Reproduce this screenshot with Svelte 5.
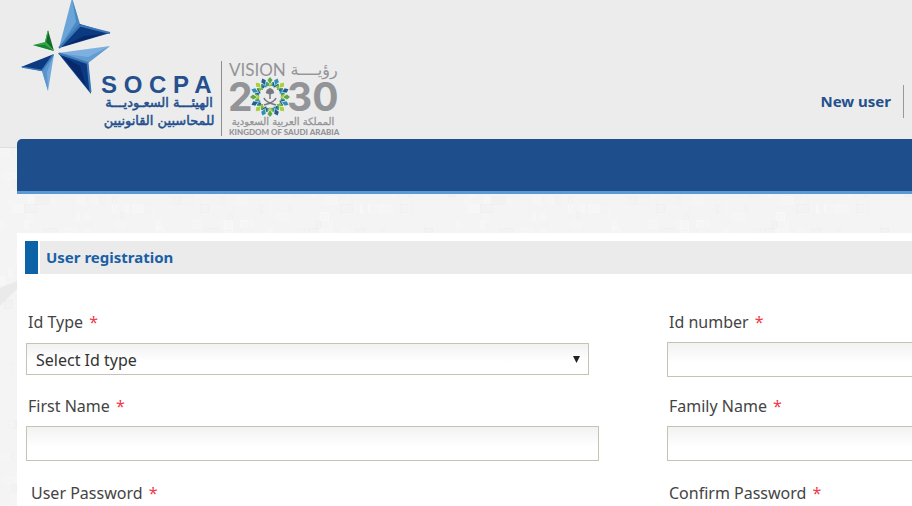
<script>
  let seed = 11;
  function rand() {
    seed = (seed * 16807) % 2147483647;
    return seed / 2147483647;
  }
  const tiles = Array.from({ length: 560 }, () => ({
    x: Math.floor(rand() * 113) * 4,
    y: Math.floor(rand() * 38) * 8,
    w: 4 * (1 + Math.floor(rand() * 3)),
    dark: rand() > 0.5,
    alpha: 0.1 + rand() * 0.6
  }));
  const ring = Array.from({ length: 16 }, (_, i) => i * 22.5);
  const dots = ['#5aa845', '#2c8fb8', '#a8d03c', '#1f5f94'];

  let idType = $state('');
</script>

<div class="page">
  <svg class="texture" aria-hidden="true">
    <defs>
      <pattern id="tiles" width="456" height="304" patternUnits="userSpaceOnUse">
        {#each tiles as t}
          <rect x={t.x + 0.5} y={t.y + 0.5} width={t.w} height="8"
            fill={t.dark ? '#f2f2f2' : '#f7f7f7'} stroke={t.dark ? '#ededed' : '#fafafa'} opacity={t.alpha} />
        {/each}
      </pattern>
    </defs>
    <rect width="100%" height="100%" fill="url(#tiles)" />
    <path d="M0 140 L17 133 V141 L0 158Z" fill="#e6e6e6" opacity=".7" />
  </svg>

  <header>
    <svg class="logo" width="350" height="139" viewBox="0 0 350 139" role="img" aria-label="SOCPA and Vision 2030">
      <g>
        <path d="M72 -2 L80 24 L59 48Z" fill="#6aa4d8" />
        <path d="M72 -2 L76 22 L59 48 L80 25Z" fill="#4b88c4" />
        <path d="M80 24 L110 33 L59 48Z" fill="#0c3a80" />
        <path d="M59 48 L80 25.500 L110 33" fill="none" stroke="#3c78b8" stroke-width="2" stroke-linejoin="round" />
        <path d="M84 36 L104 34 L64 46Z" fill="#07296b" />
        <path d="M58 53 L110 46 L88 63Z" fill="#7db0de" />
        <path d="M58 53 L88 57 L110 46 L88 63Z" fill="#639cd2" />
        <path d="M58 53 L88 63 L91 94Z" fill="#0c3a80" />
        <path d="M62 56 L80 66 L86 86Z" fill="#07296b" />
        <path d="M59 53.500 L87.500 63 L90.500 92" fill="none" stroke="#3c78b8" stroke-width="2" stroke-linejoin="round" />
        <path d="M54 54 L21 67 L42 71Z" fill="#0c3a80" />
        <path d="M54 54 L42 71 L48 91Z" fill="#74aadb" />
        <path d="M54 54 L47 72 L48 91 L42 71Z" fill="#5a94cc" />
        <path d="M22 67 L42 70.500 L53 55" fill="none" stroke="#3c78b8" stroke-width="1.500" />
        <path d="M48 30 L54 51 L45 42Z" fill="#126c29" />
        <path d="M54 51 L33 45 L45 42Z" fill="#2fa33f" />
        <path d="M33 45 L45 45 L54 51Z" fill="#168436" />
        <path d="M48 31 L45.500 42 L53 50" fill="none" stroke="#3fae4c" />
      </g>
      <g fill="#24508e">
        <text x="101" y="93" font-family="'Liberation Sans', sans-serif" font-size="24" font-weight="700">S O C P A</text>
        <g font-family="'DejaVu Sans', sans-serif" font-size="13" text-anchor="middle" stroke="#24508e" stroke-width=".5">
          <text x="159" y="107">الهيئـــة السعـوديـــة</text>
          <text x="159" y="125">للمحاسبين القانونيين</text>
        </g>
      </g>
      <path d="M221.5 61 V136" stroke="#8e8e8e" />
      <g fill="#939498">
        <text x="229" y="76" font-family="Lato, sans-serif" font-size="17">VISION</text>
        <text x="314" y="75" font-family="'DejaVu Sans', sans-serif" font-size="16" text-anchor="middle">رؤيــــة</text>
        <g font-family="Inter, sans-serif" font-size="39" font-weight="700">
          <text x="228" y="111">2</text>
          <text x="287" y="111">30</text>
        </g>
        <text x="283" y="125" font-family="'DejaVu Sans', sans-serif" font-size="10" text-anchor="middle" stroke="#939498" stroke-width=".3">المملكة العربية السعودية</text>
        <text x="229" y="135" font-family="Lato, sans-serif" font-size="8" font-weight="900">KINGDOM OF SAUDI ARABIA</text>
      </g>
      <g transform="translate(270 97)">
        {#each ring as a, i}
          <g transform="rotate({a})">
            <path d="M0 -20 L2.500 -17 L0 -13 L-2.500 -17Z" fill={dots[i % 4]} />
            <circle cx="2.500" cy="-12.500" r="1.800" fill={dots[(i + 1) % 4]} />
            <path d="M-3 -15 L0 -11 L3 -15" fill="none" stroke={dots[(i + 2) % 4]} stroke-width="1.200" />
          </g>
        {/each}
        <g fill="#77797f" stroke="#77797f">
          <path d="M0 -5 V2" stroke-width="1.500" />
          <path d="M0 -9 L3 -7 L4 -4 L1 -3 H-1 L-4 -4 L-3 -7Z" stroke-width=".5" />
          <path d="M-6 1 Q-5 5 6 8 M6 1 Q5 5 -6 8" fill="none" stroke-width="1.500" />
        </g>
      </g>
    </svg>
    <a class="new-user" href="#register">New user</a>
  </header>

  <nav aria-label="Main"></nav>

  <main id="register">
    <h1>User registration</h1>
    <form>
      <div class="field">
        <label for="id-type">Id Type <span>*</span></label>
        <div class="select">
          <select id="id-type" bind:value={idType}>
            <option value="">Select Id type</option>
          </select>
          <svg width="7" height="7" viewBox="0 0 8 8" aria-hidden="true"><path d="M0 0 H8 L4 8Z" fill="#222" /></svg>
        </div>
      </div>
      <div class="field">
        <label for="id-number">Id number <span>*</span></label>
        <input id="id-number" type="text" />
      </div>
      <div class="field">
        <label for="first-name">First Name <span>*</span></label>
        <input id="first-name" type="text" />
      </div>
      <div class="field">
        <label for="family-name">Family Name <span>*</span></label>
        <input id="family-name" type="text" />
      </div>
      <div class="field password">
        <label class="indent" for="password">User Password <span>*</span></label>
        <input id="password" type="password" />
      </div>
      <div class="field password">
        <label for="confirm">Confirm Password <span>*</span></label>
        <input id="confirm" type="password" />
      </div>
    </form>
  </main>
</div>

<style>
  :global(body) {
    background: #f4f4f4;
  }
  .page {
    position: relative;
    box-sizing: border-box;
    height: 100vh;
    overflow: hidden;
    padding-left: 17px;
    background: linear-gradient(#ececec 147px, #dedede 147px, #dedede 148px, #f4f4f4 148px);
    font-family: Tahoma, 'Noto Sans', sans-serif;
    font-size: 16px;
    color: #444;
  }
  .texture {
    position: absolute;
    top: 148px;
    left: 0;
    width: 100%;
    height: 100%;
  }
  header,
  nav,
  main {
    position: relative;
  }
  header {
    display: flex;
    justify-content: space-between;
    align-items: flex-end;
    height: 139px;
    margin-left: -17px;
  }
  .logo {
    display: block;
  }
  .new-user {
    margin: 0 8px 21px 0;
    padding-right: 12px;
    border-right: 1px solid #999;
    font-size: 15px;
    font-weight: 700;
    line-height: 33px;
    color: #24508e;
    text-decoration: none;
  }
  nav {
    height: 52px;
    border-bottom: 3px solid #5b98d6;
    border-top-left-radius: 5px;
    background: #1e4e8c;
  }
  main {
    margin-top: 39px;
    padding: 8px 0 40px 8px;
    background: #fff;
  }
  h1 {
    display: flex;
    gap: 2px;
    height: 33px;
    margin: 0 0 36px;
    font-size: 15px;
    line-height: 32px;
    color: #1b5fa6;
    background: linear-gradient(90deg, #fff 15px, #ebebeb 15px);
  }
  h1::before {
    content: '';
    width: 13px;
    margin-right: 6px;
    background: #0c63a5;
  }
  form {
    display: grid;
    grid-template-columns: 573fr 245fr;
    gap: 17px 68px;
    padding-left: 1px;
  }
  .field {
    display: flex;
    flex-direction: column;
    gap: 8px;
  }
  .password {
    margin-top: 3px;
  }
  label {
    padding-left: 2px;
    line-height: 24px;
  }
  .indent {
    padding-left: 5px;
  }
  label span {
    margin-left: 2px;
    color: #f03a48;
  }
  input,
  select {
    box-sizing: border-box;
    width: 100%;
    height: 35px;
    border: 1px solid #c6c2b4;
    border-radius: 0;
    background: linear-gradient(#f2f2f2, #fff 60%);
    font: inherit;
    color: #333;
    outline: none;
  }
  input {
    border-right-color: #c6c2b4;
    padding: 0 8px;
  }
  .field:nth-child(even) input {
    border-right: 0;
  }
  .select {
    position: relative;
    margin: 1px 10px 2px 0;
    height: 32px;
  }
  select {
    display: block;
    height: 32px;
    padding: 1px 24px 0 9px;
    appearance: none;
  }
  .select svg {
    position: absolute;
    top: 13px;
    right: 9px;
    pointer-events: none;
  }
</style>
